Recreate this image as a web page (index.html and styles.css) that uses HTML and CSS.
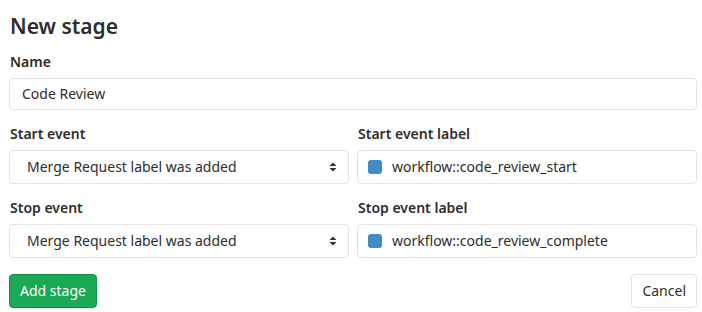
FILE: index.html
```html
<!DOCTYPE html>
<html>
<head>
<meta charset="utf-8">
<link rel="stylesheet" href="styles.css">
</head>
<body>
<form class="stage-form">
  <h3 class="title">New stage</h3>
  <div class="group">
    <label class="label">Name</label>
    <div class="control input">Code Review</div>
  </div>
  <div class="row">
    <div class="group">
      <label class="label">Start event</label>
      <div class="control select">
        <span>Merge Request label was added</span>
        <svg class="caret" width="8" height="10" viewBox="0 0 8 10"><path d="M4 0.5 L7.5 4 H0.5 Z M4 9.5 L7.5 6 H0.5 Z" fill="#333"/></svg>
      </div>
    </div>
    <div class="group">
      <label class="label">Start event label</label>
      <div class="control input labeled"><span class="swatch"></span>workflow::code_review_start</div>
    </div>
  </div>
  <div class="row">
    <div class="group">
      <label class="label">Stop event</label>
      <div class="control select">
        <span>Merge Request label was added</span>
        <svg class="caret" width="8" height="10" viewBox="0 0 8 10"><path d="M4 0.5 L7.5 4 H0.5 Z M4 9.5 L7.5 6 H0.5 Z" fill="#333"/></svg>
      </div>
    </div>
    <div class="group">
      <label class="label">Stop event label</label>
      <div class="control input labeled"><span class="swatch"></span>workflow::code_review_complete</div>
    </div>
  </div>
  <div class="actions">
    <button type="button" class="btn btn-success">Add stage</button>
    <button type="button" class="btn btn-default">Cancel</button>
  </div>
</form>
</body>
</html>
```
FILE: styles.css
```css
html, body {
  margin: 0;
  padding: 0;
  background: #fff;
}
body {
  font-family: "Noto Sans", "Open Sans", sans-serif;
  font-size: 14px;
  color: #2e2e2e;
}
.stage-form {
  padding: 12px 5px 0 9px;
}
.title {
  margin: 0 0 12px 1px;
  font-size: 21px;
  line-height: 28px;
  font-weight: 600;
  color: #2e2e2e;
}
.group {
  display: flex;
  flex-direction: column;
  margin-bottom: 14px;
}
.label {
  display: block;
  font-weight: 600;
  line-height: 20px;
  margin: 0 0 6px 1px;
}
.control {
  box-sizing: border-box;
  border: 1px solid #e3e3e3;
  border-radius: 4px;
  background: #fff;
  display: flex;
  align-items: center;
  line-height: 20px;
}
.input {
  height: 32px;
  padding: 0 12px;
}
.select {
  height: 34px;
  padding: 0 11px 0 17px;
  justify-content: space-between;
}
.labeled {
  height: 34px;
  padding: 0 10px;
}
.swatch {
  width: 14px;
  height: 14px;
  border-radius: 3px;
  background: #428bca;
  margin-right: 10px;
}
.row {
  display: grid;
  grid-template-columns: 1fr 1fr;
  column-gap: 8px;
}
.actions {
  display: flex;
  justify-content: space-between;
  margin-top: 2px;
}
.btn {
  font-family: inherit;
  font-size: 14px;
  line-height: 20px;
  height: 34px;
  padding: 0 10px;
  border-radius: 4px;
  cursor: pointer;
}
.btn-success {
  background: #1aaa55;
  border: 1px solid #168f48;
  color: #fff;
}
.btn-default {
  background: #fff;
  border: 1px solid #e3e3e3;
  color: #2e2e2e;
}
```
